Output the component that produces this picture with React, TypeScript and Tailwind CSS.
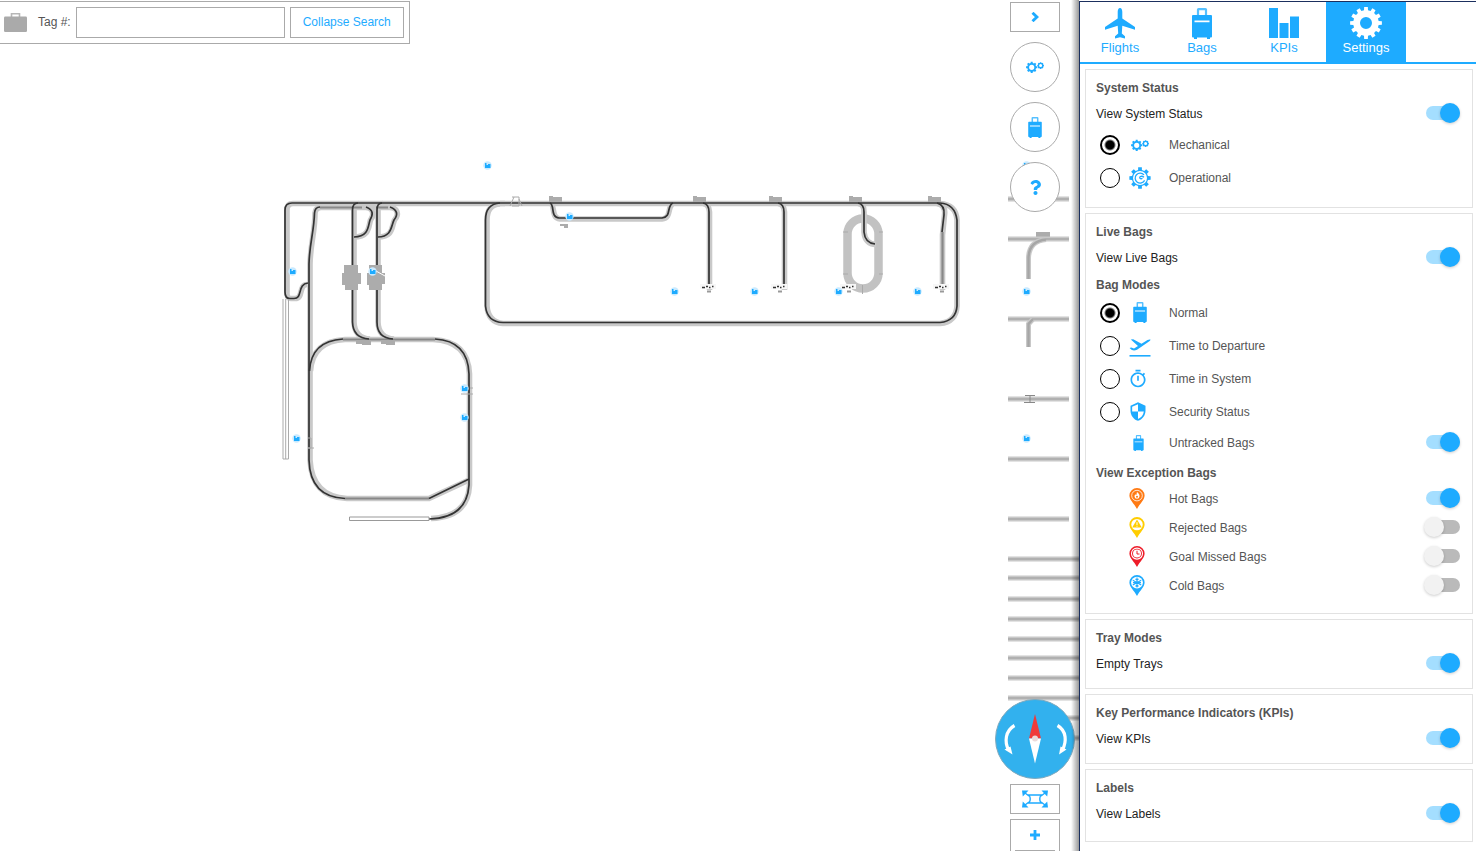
import React, { useId, useState } from "react";
import { MdOutlineTimer, MdSecurity } from "react-icons/md";
import { FaQuestion } from "react-icons/fa";

type IconProps = { className?: string };

/* ---------- icons ---------- */

function gearPath(cx: number, cy: number, outer: number, root: number, teeth: number) {
  const step = (Math.PI * 2) / teeth;
  const points: string[] = [];
  for (let i = 0; i < teeth; i++) {
    const a = i * step - Math.PI / 2;
    const corners: [number, number][] = [
      [root, a - step * 0.3],
      [outer, a - step * 0.22],
      [outer, a + step * 0.22],
      [root, a + step * 0.3],
    ];
    corners.forEach(([r, t]) =>
      points.push(`${(cx + r * Math.cos(t)).toFixed(2)} ${(cy + r * Math.sin(t)).toFixed(2)}`)
    );
  }
  return `M${points.join("L")}Z`;
}

function hole(cx: number, cy: number, r: number) {
  return `M${cx - r} ${cy}a${r} ${r} 0 1 0 ${2 * r} 0a${r} ${r} 0 1 0 ${-2 * r} 0Z`;
}

const GearIcon = ({ className }: IconProps) => (
  <svg viewBox="0 0 32 32" className={className} fill="currentColor" fillRule="evenodd" aria-hidden="true">
    <path d={gearPath(16, 16, 16, 12.8, 12) + hole(16, 16, 6)} />
  </svg>
);

const GearsIcon = ({ className }: IconProps) => (
  <svg viewBox="0 0 18 12" className={className} fill="currentColor" fillRule="evenodd" aria-hidden="true">
    <path d={gearPath(5.7, 6.3, 5.7, 4.5, 8) + hole(5.7, 6.3, 2.6)} />
    <path d={gearPath(14.6, 4.6, 3.4, 3, 8) + hole(14.6, 4.6, 1.5)} />
  </svg>
);

const OperationalIcon = ({ className }: IconProps) => (
  <svg viewBox="0 0 22 22" className={className} fill="currentColor" fillRule="evenodd" aria-hidden="true">
    <path d={gearPath(11, 11, 10.8, 8.2, 8) + hole(11, 11, 7)} />
    <path
      d="M15.600 13.400A5 5 0 1 1 15 7.900M15 10.200c-2-1.600-4.600-1-4.200.8.400 1 1.800.9 2.600.3"
      fill="none"
      stroke="currentColor"
      strokeWidth="1.300"
    />
  </svg>
);

const PlaneIcon = ({ className }: IconProps) => (
  <svg viewBox="0 0 30 31" className={className} fill="currentColor" aria-hidden="true">
    <path d="M15 0C16.600 0 17.300 2 17.300 4V10.500L30 19V21.800L17.300 17.800L16.800 25.500L20 28.300V30.500L15 29.300L10 30.500V28.300L13.200 25.500L12.700 17.800L0 21.800V19L12.700 10.500V4C12.700 2 13.400 0 15 0Z" />
  </svg>
);

const DepartureIcon = ({ className }: IconProps) => (
  <svg viewBox="0 0 22 18" className={className} fill="currentColor" aria-hidden="true">
    <path d="M1.800.6 4.200.3 12.500 4.700 18.500 1Q20.500 0 21.500.6 21.600 1.600 20 2.600L8 10.800Q5 12.400 2.500 10.800L.6 9 2.200 8.600 5 9.600 9 7Z" />
    <path d="M.5 16h21v1.600H.5z" />
  </svg>
);

const SuitcaseIcon = ({ className }: IconProps) => (
  <svg viewBox="0 0 20 31" className={className} aria-hidden="true">
    <path d="M6 8V1.600Q6 1.200 6.500 1.200h7Q14 1.200 14 1.600V8" fill="none" stroke="currentColor" strokeWidth="2.200" opacity=".75" />
    <path
      fill="currentColor"
      fillRule="evenodd"
      d="M1 7h18q1 0 1 1v20.500q0 1-1 1h-1V31h-3v-1.500H5V31H2v-1.500H1q-1 0-1-1V8q0-1 1-1Zm1.500 5.500v1.700h15v-1.700Z"
    />
  </svg>
);

const BriefcaseIcon = ({ className }: IconProps) => (
  <svg viewBox="0 0 23 19" className={className} aria-hidden="true">
    <path d="M7.500 4V.8h8V4" fill="none" stroke="currentColor" strokeWidth="1.600" opacity=".85" />
    <rect y="3.500" width="23" height="15.500" rx="1.200" fill="currentColor" />
  </svg>
);

const BarsIcon = ({ className }: IconProps) => (
  <svg viewBox="0 0 30 30" className={className} fill="currentColor" aria-hidden="true">
    <path d="M0 0h9v30H0zM10.500 15h9v15h-9zM21 8.500h9V30h-9z" />
  </svg>
);

const ChevronIcon = ({ className }: IconProps) => (
  <svg viewBox="0 0 8 10" className={className} aria-hidden="true">
    <path d="M1.500 .8 5.900 5 1.500 9.200" fill="none" stroke="currentColor" strokeWidth="2.900" />
  </svg>
);

const PlusIcon = ({ className }: IconProps) => (
  <svg viewBox="0 0 10 10" className={className} fill="currentColor" aria-hidden="true">
    <path d="M3.600 0h2.800v3.600H10v2.800H6.400V10H3.600V6.400H0V3.600h3.600z" />
  </svg>
);

const FitIcon = ({ className }: IconProps) => (
  <svg viewBox="0 0 26 18" className={className} aria-hidden="true">
    <path
      d="M3 3l4 3M23 3l-4 3M3 15l4-3M23 15l-4-3M7 5h12q-2.500 4 0 8H7q2.500-4 0-8Z"
      fill="none"
      stroke="currentColor"
      strokeWidth="1.400"
    />
    <path fill="currentColor" d="M0 .5h6.500L.8 6.500zM26 .5h-6.500L25.200 6.500zM0 17.500h6.500L.8 11.500zM26 17.500h-6.500l5.700-6z" />
  </svg>
);

const CompassIcon = ({ className }: IconProps) => (
  <svg viewBox="0 0 80 80" className={className} aria-hidden="true">
    <circle cx="40" cy="40" r="39.500" fill="#32b1ee" stroke="#7fa9bd" />
    <path d="M34 39.500 40 15l6 24.500Z" fill="#f03a3a" />
    <path d="M34 39.500 40 64.500l6-25Z" fill="#fff" />
    <circle cx="40" cy="39.500" r="3" fill="#ecd9d9" />
    <g fill="none" stroke="#fff" strokeWidth="3.200">
      <path d="M19.500 26.500C10 32 9.500 43 13.500 51" />
      <path d="M62.500 26.500C72 32 71.500 43 67.500 51" />
    </g>
    <path d="M9.500 50.500 15.500 47.500 17.500 55.500Z" fill="#fff" />
    <path d="M71.500 50.500 65.500 47.500 64 55.500Z" fill="#fff" />
  </svg>
);

function Pin({ color, children }: { color: string; children: React.ReactNode }) {
  return (
    <svg viewBox="0 0 16 21" className="h-[21px] w-4" aria-hidden="true">
      <path d="M8 0a7.600 7.600 0 0 1 7.600 7.600C15.600 12 11 15.500 8 21 5 15.500.4 12 .4 7.600A7.600 7.600 0 0 1 8 0Z" fill={color} />
      {children}
    </svg>
  );
}

const HotPin = () => (
  <Pin color="#ff7a14">
    <circle cx="8" cy="7.600" r="5.300" fill="none" stroke="#fff" strokeWidth=".8" />
    <path d="M8 4c2.200 2 2.800 3.200 2.500 4.600A2.500 2.500 0 0 1 8 10.800a2.500 2.500 0 0 1-2.500-2.400c0-1.200.5-1.700.9-2.200.3.600.5.800.9.800.5-1 .3-2 .7-3Z" fill="#fff" />
    <circle cx="8" cy="8.800" r="1" fill="#ff7a14" />
  </Pin>
);
const RejectedPin = () => (
  <Pin color="#ffcd00">
    <circle cx="8" cy="7.600" r="5.700" fill="#fff" />
    <path d="M8 2.400 12.800 10.600H3.200Z" fill="#ffcd00" />
    <path d="M8 5.200v2.800M8 8.700v1" stroke="#fff" strokeWidth="1" />
  </Pin>
);
const MissedPin = () => (
  <Pin color="#ee1c29">
    <circle cx="8" cy="7.600" r="5.500" fill="none" stroke="#fff" strokeWidth="1.100" />
    <circle cx="8" cy="7.600" r="4" fill="#fff" />
    <path d="M8 4.800V8h2.500" fill="none" stroke="#ee1c29" strokeWidth="1" />
  </Pin>
);
const ColdPin = () => (
  <Pin color="#1eabff">
    <circle cx="8" cy="7.600" r="5.900" fill="#fff" />
    <path
      d="M8 2.600v10M3.800 5.200l8.400 4.800M3.800 10l8.400-4.800M6.500 3.800 8 5.200l1.500-1.400M6.500 11.400 8 10l1.500 1.400M4 7.600h8"
      fill="none"
      stroke="#1eabff"
      strokeWidth="1.100"
    />
  </Pin>
);

/* ---------- conveyor map ---------- */

const BELTS = [
  "M505 203.500H293Q287 203.500 287 210V292Q286.500 298.500 291 298.500H295C304 298.500 298 285 307 284.500",
  "M395 207.500H322Q315.500 207 315 213C315 232 310.500 243 310 264V460Q312 497 347 498.500H429L469 480",
  "M359 203.500Q354 204 354 210V322Q354.500 338 370 339",
  "M383 203.500Q378 204 378 210V322Q378.500 338 394 339",
  "M363 207C375 207 374 216 370.500 220C368.500 226 370 237 354 237",
  "M387 207C399 207 399 215 394.500 220C391.500 226 394 237 378 237",
  "M310.500 371Q312.500 341 345 339.500H433Q468 341 469.500 374V485Q468 517 431 518.500",
  "M500 204Q487 204.500 487 220V306Q488 322 503 323.500H940Q956 322 957 306V220Q956 204.500 940 203.500H500",
  "M551 204C555 206 551 218 560 219H662C672 218 667 206 673 204",
  "M703 203.500Q709 204 709.500 212V290",
  "M778 203.500Q784 204 784.500 212V290",
  "M858 203.500Q864.500 204 864 212V232Q865 244 876 244.500",
  "M937 203.500Q946 205 944.500 215L942.500 235V290",
];

const TRACKS = [
  "M500 203H292Q285 203 285 210V292Q285 298.500 290 298.500H294C303 298.500 297 284 308 283",
  "M320 207Q315 207 314.500 213C314 232 309.500 243 309 264V460Q310 497 345 498.500M429 498.500L469 479",
  "M358 203Q352.500 203 352.500 210V322Q353 338 369 339",
  "M382 203Q377 203 377 210V322Q377 338 393 339",
  "M366 207C374 210 373 215 370 220C368 226 369 237 354 237",
  "M390 207C398 210 398 215 394 220C391 226 392 237 378 237",
  "M309.500 371Q311 341 343 339M435 339Q468 341 469 374V485Q467 518 429 519",
  "M500 203Q485.500 204 485.500 220V306Q487 322 503 322.500H940Q956 321 957 306V220Q955 204 940 203H500",
  "M550 203C555 205 550 217 559 218H662C672 217 666 206 673 203",
  "M703 203Q709 204 709 212V288",
  "M778 203Q784 204 784 212V288",
  "M858 203Q864 204 864 212V232Q865 243 875 244",
  "M937 203Q945 205 944 215L942 232",
];

const GREY_CORES = "M320 207.500H362M376 207.500H388M345 498.500H429M343 339.500H435M942.500 232V288";
const MARKERS: [number, number][] = [
  [487, 165], [292, 271], [372, 271], [569, 216], [674, 291], [754, 291], [838, 291],
  [917, 291], [464, 388], [464, 417], [296, 438], [1026, 165], [1026, 291], [1026, 438],
];
const SHORT_RAILS = [199, 239, 319, 399, 459, 519];
const LONG_RAILS = [559, 578, 599, 619, 639, 658, 678, 698, 718, 738];
const MOTORS = [549, 693, 769, 849, 928];
const TAGS = [708, 779, 848, 941];

function ConveyorMap() {
  return (
    <svg
      width="1079"
      height="851"
      viewBox="0 0 1079 851"
      role="img"
      aria-label="Conveyor map"
      className="absolute top-0 left-0 max-w-none"
    >
      <rect x="847.500" y="218.500" width="31" height="70" rx="15.500" fill="none" stroke="#c2c2c2" strokeWidth="8.500" />
      <path d="M862.500 285v9M843 232h5M879 232h4M843 274h5M879 274h4" stroke="#aaa" />
      <g fill="none" stroke="#c9c9c9" strokeWidth="5.600">
        {BELTS.map((d) => <path key={d} d={d} />)}
      </g>
      <path d={GREY_CORES} stroke="#888" strokeWidth="2.200" />
      <g fill="none" stroke="#333" strokeWidth="1.700">
        {TRACKS.map((d) => <path key={d} d={d} />)}
      </g>
      <path d="M283 299V459H288.500V299M285.700 299V459" fill="none" stroke="#aaa" />
      <path d="M349.500 517H429V520.500H349.500Z" fill="#fff" stroke="#999" />
      <g fill="#acacac">
        {MOTORS.map((x) => <path key={x} d={`M${x} 196h4v1h9v5h-13z`} />)}
        <path d="M356 340h15v5h-9v-1h-6zM381 340h14v5h-9v-1h-5z" />
        <path d="M344 265h14v8h3v11h-3v6h-13v-5h-3v-12h2zM369 265h13v8h3v11h-3v6h-13v-5h-2v-12h2z" />
        <path d="M560 224h8v4h-4v-2h-4zM1036 232h14v5h-14z" />
      </g>
      <path d="M376 271l9 5" stroke="#fff" />
      <path d="M512 197h7v9h-7M519 199l3 7M510 206l4-9M461 394h12M470 388h3M308 438h3v10h-3M308 448h6" fill="none" stroke="#aaa" />
      <g stroke="#c8c8c8" strokeWidth="5">
        {SHORT_RAILS.map((y) => <path key={y} d={`M1008 ${y}H1069`} />)}
        {LONG_RAILS.map((y) => <path key={y} d={`M1008 ${y}H1079`} />)}
      </g>
      <g stroke="#b0b0b0" strokeWidth="2">
        {SHORT_RAILS.map((y) => <path key={y} d={`M1008 ${y}H1069`} />)}
        {LONG_RAILS.map((y) => <path key={y} d={`M1008 ${y}H1079`} />)}
      </g>
      <g fill="none" stroke="#c8c8c8" strokeWidth="5">
        <path d="M1028.500 279V258Q1029 241 1046 239.500M1028.500 347V324L1033 319" />
      </g>
      <g fill="none" stroke="#a6a6a6" strokeWidth="2.500">
        <path d="M1028.500 279V258Q1029 241 1046 239.500M1028.500 347V324L1033 319" />
      </g>
      <path d="M1025 395.500h10M1030 395v8M1024 402.500h11" fill="none" stroke="#888" />
      {TAGS.map((x) => (
        <g key={x}>
          <rect x={x - 8} y="284" width="16" height="5" fill="#f7f7f7" />
          <path d={`M${x - 6} 287.500h3M${x - 2} 286.500h2M${x + 1} 287.500h1.500M${x + 4} 286.500h1.500`} stroke="#333" strokeWidth="1.500" />
          <path d={`M${x - 1} 291.500h4`} stroke="#999" strokeWidth="2" />
        </g>
      ))}
      {MARKERS.map(([x, y]) => (
        <g key={`${x}-${y}`}>
          <circle cx={x + 0.5} cy={y + 0.5} r="4.200" fill="#c9eaff" />
          <path d={`M${x - 2} ${y - 2}h1.500v2h1.500v-1h2.500v4h-5.500z`} fill="#1eabff" />
        </g>
      ))}
    </svg>
  );
}

/* ---------- settings panel ---------- */

const TABS = [
  { name: "Flights", icon: <PlaneIcon className="h-[31px] w-[30px]" /> },
  { name: "Bags", icon: <SuitcaseIcon className="h-[31px] w-5" /> },
  { name: "KPIs", icon: <BarsIcon className="size-[30px]" /> },
  { name: "Settings", icon: <GearIcon className="size-8" /> },
];

function Card({ title, className, children }: { title: string; className: string; children: React.ReactNode }) {
  return (
    <section className={`border border-[#e2e2e2] pt-[5px] pr-3 pl-[10px] ${className}`}>
      <h2 className="flex h-[26px] items-center font-bold text-[#555]">{title}</h2>
      {children}
    </section>
  );
}

const Subtitle = ({ children }: { children: React.ReactNode }) => (
  <h3 className="flex h-[25px] items-center pt-[2px] font-bold text-[#555]">{children}</h3>
);

function Switch({ id, on }: { id: string; on: boolean }) {
  return (
    <input
      id={id}
      type="checkbox"
      role="switch"
      defaultChecked={on}
      className="relative mb-[2px] ml-auto h-[14px] w-[34px] shrink-0 appearance-none rounded-full bg-[#bababa] before:absolute before:-top-[3px] before:-left-[2px] before:size-5 before:rounded-full before:bg-[#f2f2f2] before:shadow-[0_1px_3px_rgba(0,0,0,0.2)] checked:bg-[#a4deff] checked:before:left-[14px] checked:before:bg-[#1eabff]"
    />
  );
}

function ToggleRow({ label, on }: { label: string; on: boolean }) {
  const id = useId();
  return (
    <div className="flex h-[26px] items-center">
      <label htmlFor={id} className="text-[#222]">{label}</label>
      <Switch id={id} on={on} />
    </div>
  );
}

function IconToggleRow({ label, on, icon }: { label: string; on: boolean; icon: React.ReactNode }) {
  const id = useId();
  return (
    <div className="flex h-[29px] items-center pl-[30px]">
      <span className="flex w-[21px] justify-center text-[#1eabff]">{icon}</span>
      <label htmlFor={id} className="ml-[22px] text-[#555]">{label}</label>
      <Switch id={id} on={on} />
    </div>
  );
}

type Option = { label: string; icon: React.ReactNode };

function RadioRows({ name, options }: { name: string; options: Option[] }) {
  return (
    <div role="radiogroup" aria-label={name}>
      {options.map((option, i) => (
        <label key={option.label} className="flex h-[33px] items-center pl-1 text-[#555]">
          <input
            type="radio"
            name={name}
            defaultChecked={i === 0}
            className="size-5 shrink-0 appearance-none rounded-full border border-black checked:border-2 checked:bg-[radial-gradient(circle,#000_4px,transparent_6px)]"
          />
          <span className="ml-2 flex w-6 justify-center text-[#1eabff]">{option.icon}</span>
          <span className="ml-[17px]">{option.label}</span>
        </label>
      ))}
    </div>
  );
}

function SettingsPanel() {
  const [active, setActive] = useState("Settings");
  return (
    <aside className="relative mt-px w-[397px] shrink-0 overflow-y-hidden border-t border-l border-[#1b2f5e] bg-white">
      <nav className="flex gap-[2px] border-b-2 border-[#1eabff]" aria-label="Panels">
        {TABS.map((tab) => (
          <button
            key={tab.name}
            type="button"
            onClick={() => setActive(tab.name)}
            className={`flex h-[60px] w-20 flex-col items-center text-[13px] leading-4 ${
              active === tab.name ? "bg-[#1eabff] text-white" : "text-[#1eabff]"
            }`}
          >
            <span className="flex h-[38px] items-center justify-center pt-1">{tab.icon}</span>
            {tab.name}
          </button>
        ))}
      </nav>
      <div className="flex flex-col gap-[5px] py-[5px] pr-[3px] pl-[5px]">
        <Card title="System Status" className="pb-[13px]">
          <ToggleRow label="View System Status" on />
          <div className="pt-px">
            <RadioRows
              name="System status view"
              options={[
                { label: "Mechanical", icon: <GearsIcon className="h-3 w-[18px]" /> },
                { label: "Operational", icon: <OperationalIcon className="size-[22px]" /> },
              ]}
            />
          </div>
        </Card>
        <Card title="Live Bags" className="pb-[13px]">
          <ToggleRow label="View Live Bags" on />
          <Subtitle>Bag Modes</Subtitle>
          <RadioRows
            name="Bag mode"
            options={[
              { label: "Normal", icon: <SuitcaseIcon className="h-[21px] w-[14px]" /> },
              { label: "Time to Departure", icon: <DepartureIcon className="mt-1 h-[18px] w-[22px]" /> },
              { label: "Time in System", icon: <MdOutlineTimer className="mr-1 size-[22px]" aria-hidden="true" /> },
              { label: "Security Status", icon: <MdSecurity className="mr-1 size-[21px]" aria-hidden="true" /> },
            ]}
          />
          <IconToggleRow label="Untracked Bags" on icon={<SuitcaseIcon className="ml-1 h-4 w-[11px]" />} />
          <div className="pt-[2px]">
            <Subtitle>View Exception Bags</Subtitle>
            <IconToggleRow label="Hot Bags" on icon={<HotPin />} />
            <IconToggleRow label="Rejected Bags" on={false} icon={<RejectedPin />} />
            <IconToggleRow label="Goal Missed Bags" on={false} icon={<MissedPin />} />
            <IconToggleRow label="Cold Bags" on={false} icon={<ColdPin />} />
          </div>
        </Card>
        <Card title="Tray Modes" className="pb-[11px]">
          <ToggleRow label="Empty Trays" on />
        </Card>
        <Card title="Key Performance Indicators (KPIs)" className="pb-[11px]">
          <ToggleRow label="View KPIs" on />
        </Card>
        <Card title="Labels" className="pb-[14px]">
          <ToggleRow label="View Labels" on />
        </Card>
      </div>
    </aside>
  );
}

/* ---------- page ---------- */

const boxButton = "flex h-[30px] w-[50px] items-center justify-center border border-[#aaa] bg-white text-[#1eabff]";
const roundButton = "flex size-[50px] items-center justify-center rounded-full border border-[#aaa] bg-white text-[#1eabff]";

export default function App() {
  return (
    <div className="flex h-screen overflow-hidden bg-white font-['Liberation_Sans',Arial,sans-serif] text-xs">
      <main className="relative min-w-0 flex-1 overflow-hidden">
        <ConveyorMap />

        <form
          className="absolute top-px left-0 flex items-center border border-l-0 border-[#aaa] bg-white p-[5px] pl-1"
          onSubmit={(e) => e.preventDefault()}
        >
          <BriefcaseIcon className="h-[19px] w-[23px] text-[#aaa]" />
          <label htmlFor="tag" className="ml-[11px] pb-[2px] text-[#555]">Tag #:</label>
          <input id="tag" type="text" className="ml-[5px] h-[31px] w-[209px] border border-[#aaa] px-2 outline-none" />
          <button type="button" className="ml-[5px] h-[31px] border border-[#aaa] px-3 pb-[2px] text-[#1eabff]">
            Collapse Search
          </button>
        </form>

        <div className="absolute top-[2px] right-[19px] flex flex-col gap-[10px]">
          <button type="button" aria-label="Hide panel" className={boxButton}>
            <ChevronIcon className="h-[10px] w-2" />
          </button>
          <button type="button" aria-label="System status" className={roundButton}>
            <GearsIcon className="h-3 w-[18px]" />
          </button>
          <button type="button" aria-label="Bags" className={roundButton}>
            <SuitcaseIcon className="h-[21px] w-[14px]" />
          </button>
          <button type="button" aria-label="Help" className={roundButton}>
            <FaQuestion className="size-[15px]" aria-hidden="true" />
          </button>
        </div>

        <div className="absolute top-[699px] right-1 flex flex-col items-center gap-[5px]">
          <button type="button" aria-label="Rotate map" className="size-20 rounded-full">
            <CompassIcon className="size-20" />
          </button>
          <button type="button" aria-label="Fit to screen" className={boxButton}>
            <FitIcon className="h-[18px] w-[26px]" />
          </button>
          <div className="flex flex-col items-center border border-[#aaa] bg-white text-[#1eabff]">
            <button type="button" aria-label="Zoom in" className="flex h-[30px] w-12 items-center justify-center">
              <PlusIcon className="size-[10px]" />
            </button>
            <span className="h-px w-10 bg-[#aaa]" />
            <button type="button" aria-label="Zoom out" className="flex h-[30px] w-12 items-center justify-center">
              <span className="h-[2px] w-[10px] bg-[#1eabff]" />
            </button>
          </div>
        </div>
        <div className="pointer-events-none absolute inset-y-0 right-0 w-2 bg-linear-to-r from-transparent to-black/40" />
      </main>
      <SettingsPanel />
    </div>
  );
}
